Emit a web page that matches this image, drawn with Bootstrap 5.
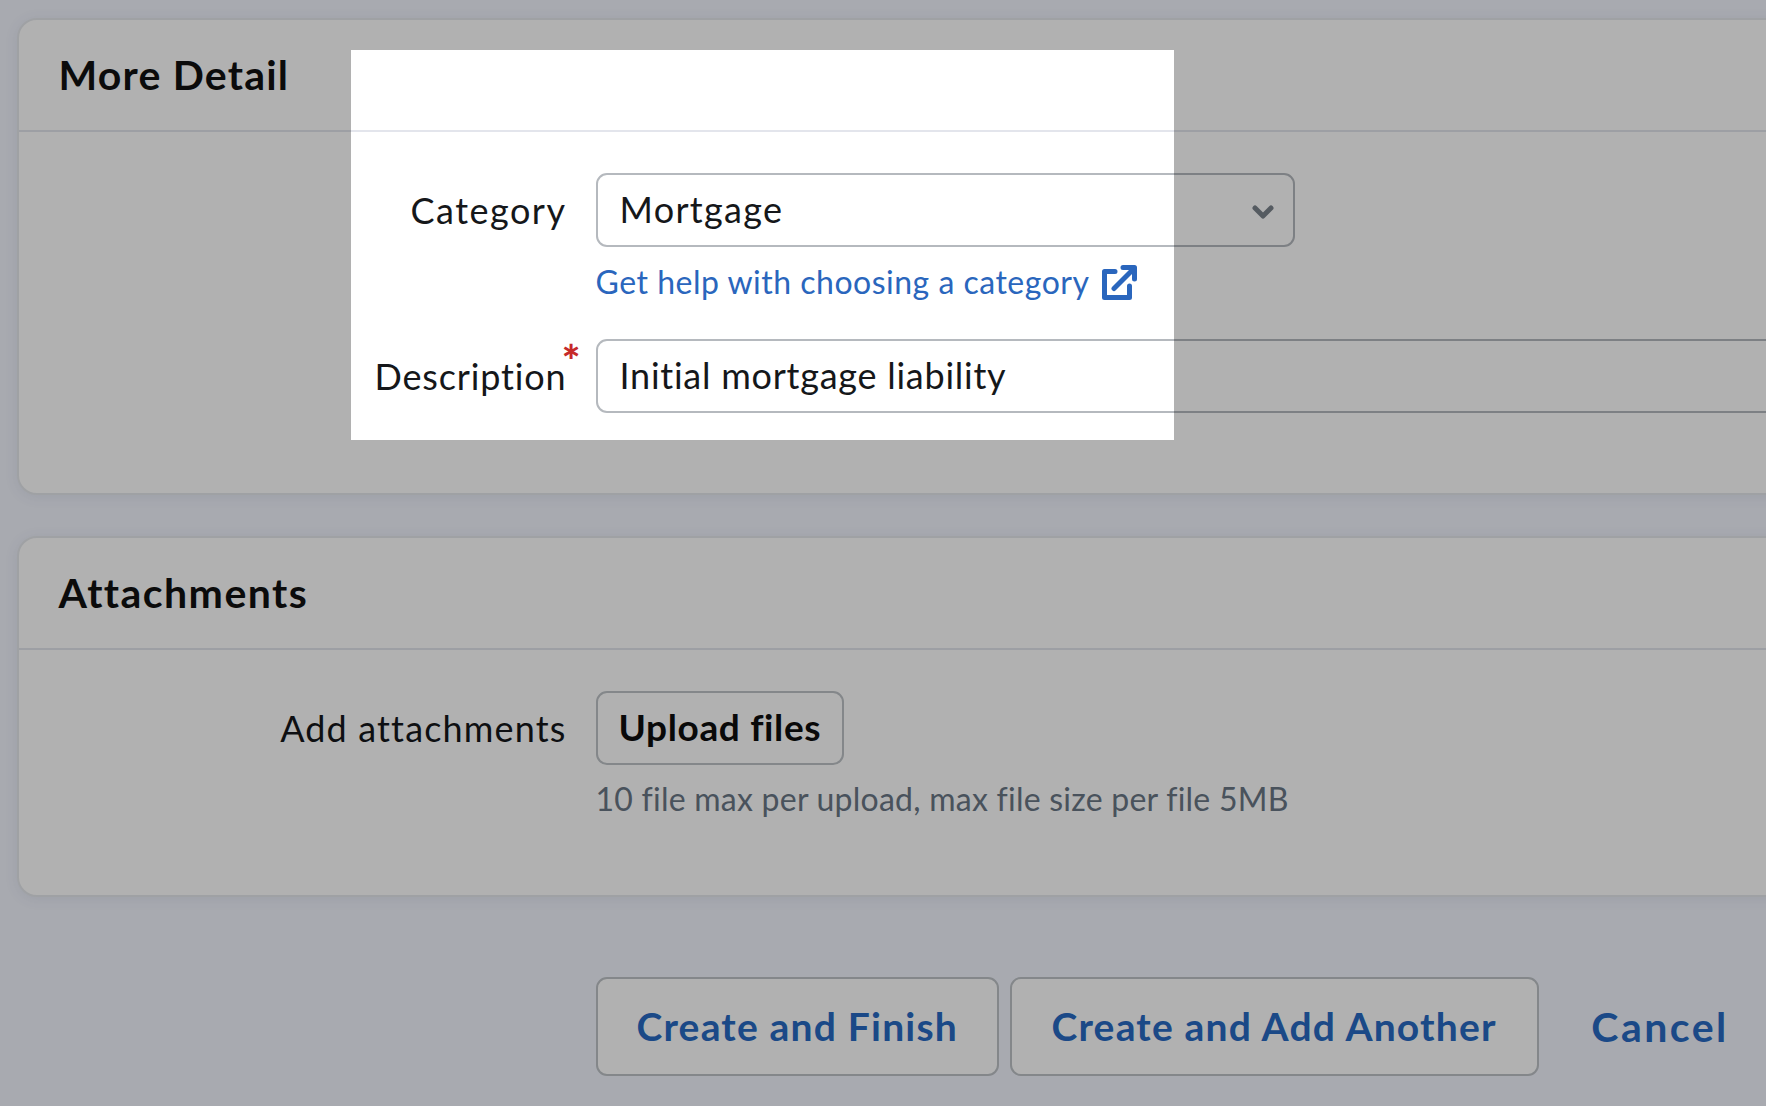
<!DOCTYPE html>
<html lang="en">
<head>
<meta charset="utf-8">
<title>More Detail</title>
<link href="https://cdn.jsdelivr.net/npm/bootstrap@5.3.0/dist/css/bootstrap.min.css" rel="stylesheet">
<style>
html,body{height:1106px;overflow:hidden}
body{background:#f2f5fe;font-family:"Lato","Liberation Sans",sans-serif;color:#15171a;position:relative}
.page-wrap{width:1960px;padding:18px 0 0 16.500px}
.sec-card{border:2px solid #e6e8ed;border-radius:20px;background:#fff;box-shadow:0 2px 14px rgba(70,80,110,.09);overflow:visible}
.sec-card + .sec-card{margin-top:41px}
.sec-head{height:112px;padding:0 0 0 40px;background:transparent;border-bottom:2px solid #e3e5ec;display:flex;align-items:center}
.sec-head:first-child{border-radius:20px 20px 0 0}
.sec-title{font-size:41px;font-weight:700;color:#111;margin:0 0 2px;line-height:1;letter-spacing:1.2px}
.sec-title.wider{letter-spacing:1.45px}
.sec-body{padding:41px 40px 80px 0}
.sec-body.alt{padding-bottom:76px}
.lbl-col{width:577px;flex:none;text-align:right;padding-right:29px;font-size:36px;line-height:74px;color:#15171a;margin:0;position:relative;letter-spacing:1.15px}
.lbl-col.tight{letter-spacing:.85px}
.lbl-col.loose{letter-spacing:1.5px}
.lbl-col .req{position:absolute;right:15px;top:-16px;color:#c62a2a;font-size:44px;font-weight:900;line-height:74px;letter-spacing:0}
.form-select.pick,.form-control.pick{height:74px;font-size:36px;line-height:1.2;padding:0 22px;border:2px solid #b5b9be;border-radius:11px;color:#15171a;font-family:inherit}
.form-control.pick{letter-spacing:.75px;padding-bottom:2px}
.form-select.pick{letter-spacing:1.3px;width:699px;background-image:url("data:image/svg+xml,%3csvg xmlns='http://www.w3.org/2000/svg' viewBox='0 0 22 14'%3e%3cpath fill='none' stroke='%237b838c' stroke-width='5' stroke-linecap='round' stroke-linejoin='round' d='M3 3l8 8 8-8'/%3e%3c/svg%3e");background-size:22px 14px;background-position:right 19px top 30px}
.help-link{display:inline-flex;align-items:center;gap:13px;color:#2a66bd;font-size:32px;line-height:40px;text-decoration:none;margin:15px 0 37px;letter-spacing:.5px}
.help-link svg{width:35px;height:35px;flex:none;margin-top:1px}
.up-btn{height:74px;padding:0 21px 2px;font-size:37px;font-weight:700;color:#0d0d0d;background:#fff;border:2px solid #bec3c7;border-radius:11px;letter-spacing:.65px}
.note{font-size:32px;line-height:40px;color:#697685;margin-top:14px;letter-spacing:.24px}
.actions{margin:80px 0 0 579px;gap:10.500px}
.act-btn{height:99px;padding:0 39px;font-size:39px;font-weight:700;color:#286ac3;background:#fff;border:2px solid #bec3c7;border-radius:11px;letter-spacing:1.2px}
.act-btn + .act-btn{padding:0 40px}
.act-btn:hover{color:#286ac3;background:#fff}
.act-link{font-size:41px;font-weight:700;color:#286ac3;text-decoration:none;margin-left:42px;letter-spacing:2.5px}
.spot{position:absolute;left:351px;top:50px;width:823px;height:390px;box-shadow:0 0 0 3000px rgba(0,0,0,.306);pointer-events:none}
</style>
</head>
<body>
<div class="page-wrap">
  <div class="card sec-card">
    <div class="card-header sec-head"><h2 class="sec-title">More Detail</h2></div>
    <div class="card-body sec-body">
      <div class="d-flex">
        <label class="lbl-col loose" for="cat">Category</label>
        <div>
          <select id="cat" class="form-select pick"><option>Mortgage</option></select>
          <a class="help-link" href="#">Get help with choosing a category
            <svg viewBox="0 0 35 35" fill="none" stroke="#2a66bd" stroke-width="5" stroke-linecap="round" stroke-linejoin="round" aria-hidden="true"><path d="M13 6.500H2.500V32.500H27.500V21"/><path d="M12 23.500L32 3.500"/><path d="M21 2.500H32.500V14"/></svg>
          </a>
        </div>
      </div>
      <div class="d-flex">
        <label class="lbl-col tight" for="desc">Description<span class="req">*</span></label>
        <input id="desc" class="form-control pick flex-grow-1 w-auto" value="Initial mortgage liability">
      </div>
    </div>
  </div>
  <div class="card sec-card">
    <div class="card-header sec-head"><h2 class="sec-title wider">Attachments</h2></div>
    <div class="card-body sec-body alt">
      <div class="d-flex">
        <span class="lbl-col">Add attachments</span>
        <div>
          <button type="button" class="btn up-btn">Upload files</button>
          <div class="note">10 file max per upload, max file size per file 5MB</div>
        </div>
      </div>
    </div>
  </div>
  <div class="d-flex align-items-center actions">
    <button type="button" class="btn act-btn">Create and Finish</button>
    <button type="button" class="btn act-btn">Create and Add Another</button>
    <a class="act-link" href="#">Cancel</a>
  </div>
</div>
<div class="spot"></div>
<script src="https://cdn.jsdelivr.net/npm/bootstrap@5.3.0/dist/js/bootstrap.bundle.min.js"></script>
</body>
</html>
